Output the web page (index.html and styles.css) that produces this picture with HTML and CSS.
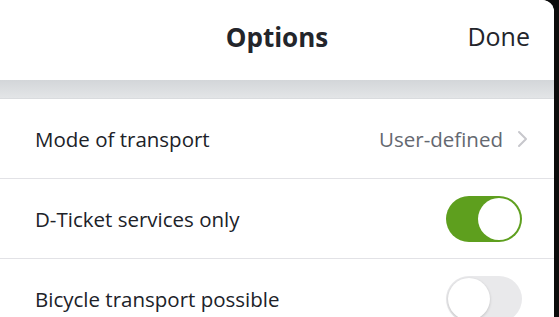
FILE: index.html
```html
<!DOCTYPE html>
<html>
<head>
<meta charset="utf-8">
<link rel="stylesheet" href="styles.css">
</head>
<body>
<div class="sheet">
  <header class="header">
    <div class="title">Options</div>
    <div class="done">Done</div>
  </header>
  <div class="band"></div>
  <div class="list">
    <div class="row">
      <span class="label">Mode of transport</span>
      <span class="value">User-defined
        <svg class="chev" width="11" height="18" viewBox="0 0 11 18"><path d="M2 2 L9 9 L2 16" fill="none" stroke="#c7c7cc" stroke-width="2" stroke-linecap="round" stroke-linejoin="round"/></svg>
      </span>
    </div>
    <div class="row">
      <span class="label">D-Ticket services only</span>
      <span class="toggle on"><span class="knob"></span></span>
    </div>
    <div class="row">
      <span class="label">Bicycle transport possible</span>
      <span class="toggle"><span class="knob"></span></span>
    </div>
  </div>
</div>
</body>
</html>
```

FILE: styles.css
```css
html, body {
  margin: 0;
  padding: 0;
  background: #0c0c0c;
  height: 317px;
  overflow: hidden;
}
.sheet {
  width: 554px;
  height: 317px;
  background: #ffffff;
  border-top-right-radius: 12px;
  overflow: hidden;
  font-family: "Open Sans", Lato, sans-serif;
  color: #1e2026;
}
.header {
  height: 80px;
  position: relative;
  display: flex;
  align-items: center;
  justify-content: center;
  background: #fff;
}
.title {
  font-size: 26px;
  font-weight: 700;
  color: #23252b;
  margin-top: -6px;
}
.done {
  position: absolute;
  right: 24px;
  top: 19px;
  font-size: 25px;
  font-weight: 400;
  color: #23252b;
}
.band {
  height: 18px;
  background: linear-gradient(#d3d6d9, #e3e5e7);
  border-bottom: 1px solid #d9dbde;
}
.row {
  height: 79px;
  display: flex;
  align-items: center;
  justify-content: space-between;
  padding: 0 32px 0 35px;
  border-bottom: 1px solid #e2e2e6;
}
.label {
  font-size: 20.5px;
  color: #202228;
}
.value {
  display: flex;
  align-items: center;
  gap: 14px;
  font-size: 20.5px;
  color: #646870;
  margin-right: -6px;
}
.toggle {
  width: 76px;
  height: 46px;
  border-radius: 23px;
  background: #e9e9eb;
  position: relative;
  box-sizing: border-box;
}
.toggle .knob {
  position: absolute;
  top: 2px;
  left: 2px;
  width: 42px;
  height: 42px;
  border-radius: 50%;
  background: #fff;
  box-shadow: 0 1px 3px rgba(0,0,0,0.18);
}
.toggle.on {
  background: #5e9f1e;
}
.toggle.on .knob {
  left: 32px;
  box-shadow: none;
}
```
